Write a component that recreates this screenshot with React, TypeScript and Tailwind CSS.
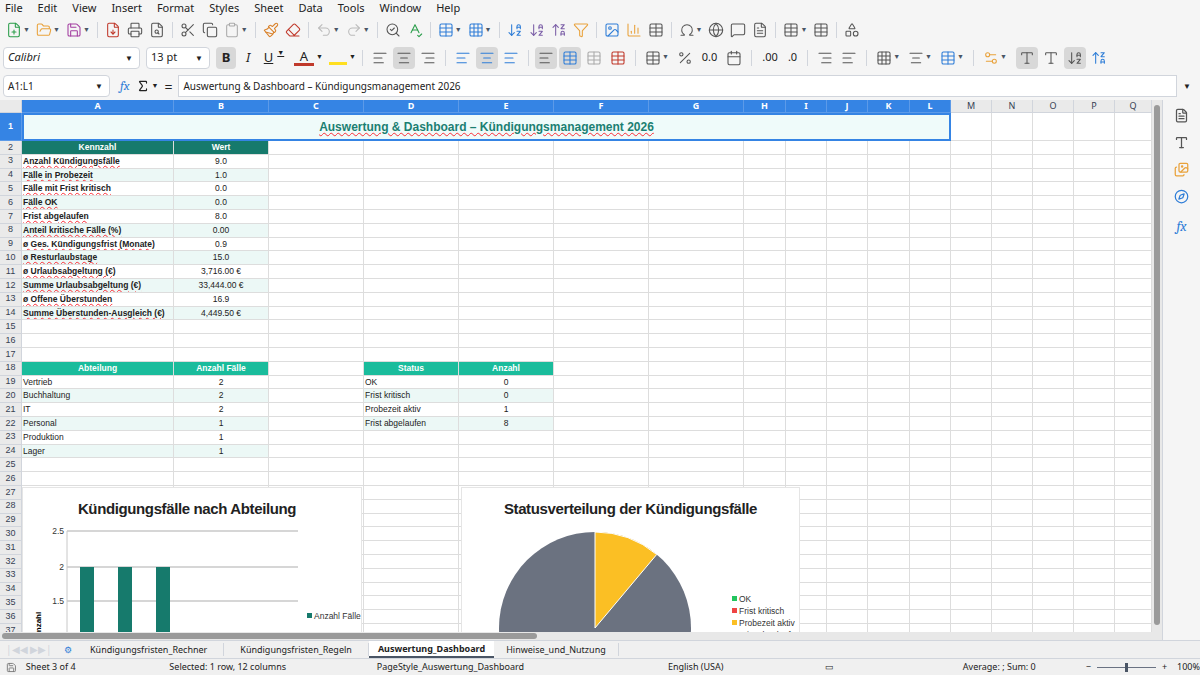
import { FilePlus, FolderOpen, Save, FileDown, Printer, FileSearch, Scissors, Copy, Clipboard, Paintbrush, Eraser, Undo2, Redo2, SearchCheck, SpellCheck, Table, Grid3x3, ArrowDownAZ, ArrowUpZA, Filter, Image, BarChart3, Omega, Globe, MessageSquare, Sigma, AlignLeft, AlignCenter, AlignRight, Percent, Calendar, Settings2, FileText, Type, Images, Compass, Shapes } from "lucide-react";

const cols: [string, number][] = [
  ["A", 152], ["B", 95], ["C", 95], ["D", 95], ["E", 95], ["F", 95], ["G", 95],
  ["H", 42], ["I", 41], ["J", 41], ["K", 42], ["L", 41], ["M", 41], ["N", 41], ["O", 41], ["P", 41], ["Q", 37],
];

const kpis: [string, string][] = [
  ["Anzahl Kündigungsfälle", "9.0"], ["Fälle in Probezeit", "1.0"], ["Fälle mit Frist kritisch", "0.0"],
  ["Fälle OK", "0.0"], ["Frist abgelaufen", "8.0"], ["Anteil kritische Fälle (%)", "0.00"],
  ["ø Ges. Kündigungsfrist (Monate)", "0.9"], ["ø Resturlaubstage", "15.0"], ["ø Urlaubsabgeltung (€)", "3,716.00 €"],
  ["Summe Urlaubsabgeltung (€)", "33,444.00 €"], ["ø Offene Überstunden", "16.9"], ["Summe Überstunden-Ausgleich (€)", "4,449.50 €"],
];
const depts: [string, string][] = [["Vertrieb", "2"], ["Buchhaltung", "2"], ["IT", "2"], ["Personal", "1"], ["Produktion", "1"], ["Lager", "1"]];
const stats: [string, string][] = [["OK", "0"], ["Frist kritisch", "0"], ["Probezeit aktiv", "1"], ["Frist abgelaufen", "8"]];

type C = { t?: string; cls?: string };

function cellsFor(r: number): Record<number, C> {
  const m: Record<number, C> = {};
  if (r === 2) {
    m[0] = { t: "Kennzahl", cls: "bg-[#167a6c] text-white font-bold justify-center" };
    m[1] = { t: "Wert", cls: "bg-[#167a6c] text-white font-bold justify-center" };
  }
  if (r >= 3 && r <= 14) {
    const k = kpis[r - 3];
    const bg = r % 2 === 0 ? "bg-[#ecf8f6]" : "";
    m[0] = { t: k[0], cls: `font-bold underline decoration-wavy decoration-red-500 decoration-[0.5px] ${bg}` };
    m[1] = { t: k[1], cls: `justify-center ${bg}` };
  }
  if (r === 18) {
    m[0] = { t: "Abteilung", cls: "bg-[#1abc9c] text-white font-bold justify-center" };
    m[1] = { t: "Anzahl Fälle", cls: "bg-[#1abc9c] text-white font-bold justify-center" };
    m[3] = { t: "Status", cls: "bg-[#1abc9c] text-white font-bold justify-center" };
    m[4] = { t: "Anzahl", cls: "bg-[#1abc9c] text-white font-bold justify-center" };
  }
  if (r >= 19 && r <= 24) {
    const d = depts[r - 19];
    const bg = r % 2 === 0 ? "bg-[#ecf8f6]" : "";
    m[0] = { t: d[0], cls: bg };
    m[1] = { t: d[1], cls: `justify-center ${bg}` };
  }
  if (r >= 19 && r <= 22) {
    const s = stats[r - 19];
    const bg = r % 2 === 0 ? "bg-[#ecf8f6]" : "";
    m[3] = { t: s[0], cls: bg };
    m[4] = { t: s[1], cls: `justify-center ${bg}` };
  }
  return m;
}

const Ico = ({ c: Comp, color = "#555", dd }: { c: any; color?: string; dd?: boolean }) => (
  <div className="flex items-center gap-[1px] px-[3px]">
    <Comp size={16} color={color} strokeWidth={1.6} />
    {dd && <span className="text-[7px] text-gray-600">▼</span>}
  </div>
);

const Sep = () => <div className="w-px h-4 bg-gray-300 mx-1" />;

export default function App() {
  const rows = Array.from({ length: 38 }, (_, i) => i + 1);
  return (
    <div className="w-[1200px] h-[675px] bg-[#f5f5f5] overflow-hidden flex flex-col text-[#222]" style={{ fontFamily: '"Noto Sans", "Open Sans", sans-serif' }}>
      {/* menu */}
      <div className="h-[17px] flex items-center gap-[15px] px-[5px] text-[11px]">
        {["File", "Edit", "View", "Insert", "Format", "Styles", "Sheet", "Data", "Tools", "Window", "Help"].map((m) => <span key={m}>{m}</span>)}
      </div>
      {/* toolbar 1 */}
      <div className="h-[26px] flex items-center px-[3px]">
        <Ico c={FilePlus} color="#2a9d4a" dd /><Ico c={FolderOpen} color="#e9a23b" dd /><Ico c={Save} color="#a33ea1" dd />
        <Sep />
        <Ico c={FileDown} color="#c0392b" /><Ico c={Printer} /><Ico c={FileSearch} />
        <Sep />
        <Ico c={Scissors} /><Ico c={Copy} /><Ico c={Clipboard} color="#aaa" dd />
        <Sep />
        <Ico c={Paintbrush} color="#d9822b" /><Ico c={Eraser} color="#c0392b" />
        <Sep />
        <Ico c={Undo2} color="#bbb" dd /><Ico c={Redo2} color="#bbb" dd />
        <Sep />
        <Ico c={SearchCheck} /><Ico c={SpellCheck} color="#2a9d4a" />
        <Sep />
        <Ico c={Table} color="#2e7dd7" dd /><Ico c={Grid3x3} color="#2e7dd7" dd />
        <Sep />
        <Ico c={ArrowDownAZ} color="#2e7dd7" /><Ico c={ArrowDownAZ} color="#7b5ea7" /><Ico c={ArrowUpZA} color="#7b5ea7" /><Ico c={Filter} color="#e9a23b" />
        <Sep />
        <Ico c={Image} color="#2e7dd7" /><Ico c={BarChart3} color="#e9a23b" /><Ico c={Table} />
        <Sep />
        <Ico c={Omega} dd /><Ico c={Globe} /><Ico c={MessageSquare} /><Ico c={FileText} />
        <Sep />
        <Ico c={Table} dd /><Ico c={Table} />
        <Sep />
        <Ico c={Shapes} />
      </div>
      {/* toolbar 2 */}
      <div className="h-[29px] flex items-center px-[3px] gap-[2px]">
        <div className="w-[137px] h-[22px] bg-white border border-gray-300 rounded flex items-center text-[11px] italic">
          <span className="flex-1 px-[4px]">Calibri</span>
          <span className="w-[20px] text-center text-[8px] not-italic">▼</span>
        </div>
        <div className="w-[64px] h-[22px] bg-white border border-gray-300 rounded flex items-center text-[11px] ml-[4px]">
          <span className="flex-1 px-[4px]">13 pt</span>
          <span className="w-[20px] text-center text-[8px]">▼</span>
        </div>
        <div className="w-[20px] h-[22px] bg-[#d8d8d8] rounded flex items-center justify-center font-bold text-[13px] ml-[4px]">B</div>
        <div className="w-[20px] flex justify-center italic text-[13px]">I</div>
        <div className="w-[28px] flex justify-center underline text-[13px]">U<span className="text-[7px] ml-1">▼</span></div>
        <div className="w-[20px] flex justify-center text-[13px] border-b-[3px] border-[#c0392b] leading-[14px] ml-1">A</div>
        <span className="text-[7px]">▼</span>
        <div className="w-[18px] h-[14px] border-b-[3px] border-yellow-300 ml-1" /><span className="text-[7px]">▼</span>
        <Sep />
        <Ico c={AlignLeft} /><div className="bg-[#d8d8d8] rounded py-[3px]"><Ico c={AlignCenter} /></div><Ico c={AlignRight} />
        <Sep />
        <Ico c={AlignLeft} color="#2e7dd7" /><div className="bg-[#d8d8d8] rounded py-[3px]"><Ico c={AlignCenter} color="#2e7dd7" /></div><Ico c={AlignLeft} color="#2e7dd7" />
        <Sep />
        <div className="bg-[#d8d8d8] rounded py-[3px]"><Ico c={AlignLeft} /></div><div className="bg-[#d8d8d8] rounded py-[3px]"><Ico c={Table} color="#2e7dd7" /></div><Ico c={Table} color="#aaa" /><Ico c={Table} color="#c0392b" />
        <Sep />
        <Ico c={Table} dd /><Ico c={Percent} /><span className="text-[11px] px-1">0.0</span><Ico c={Calendar} />
        <Sep />
        <span className="text-[11px] px-1">.00</span><span className="text-[11px] px-1">.0</span>
        <Sep />
        <Ico c={AlignRight} /><Ico c={AlignLeft} />
        <Sep />
        <Ico c={Grid3x3} dd /><Ico c={AlignCenter} dd /><Ico c={Table} color="#2e7dd7" dd />
        <Sep />
        <Ico c={Settings2} color="#e9a23b" dd />
        <div className="bg-[#d8d8d8] rounded py-[3px] ml-1"><Ico c={Type} /></div><Ico c={Type} />
        <div className="bg-[#d8d8d8] rounded py-[3px]"><Ico c={ArrowDownAZ} /></div><Ico c={ArrowUpZA} color="#2e7dd7" />
      </div>
      {/* formula bar */}
      <div className="h-[28px] flex items-center px-[3px] gap-[6px]">
        <div className="w-[107px] h-[22px] bg-white border border-gray-300 rounded flex items-center text-[10px]">
          <span className="flex-1 px-[4px]">A1:L1</span>
          <span className="w-[20px] text-center text-[8px]">▼</span>
        </div>
        <span className="italic text-[13px] text-[#2e7dd7] font-serif ml-1">fx</span>
        <Sigma size={14} /><span className="text-[7px] -ml-1">▼</span>
        <span className="text-[14px]">=</span>
        <div className="flex-1 h-[22px] bg-white border border-gray-300 flex items-center text-[10px] px-[4px]">Auswertung &amp; Dashboard – Kündigungsmanagement 2026</div>
        <span className="text-[8px] w-[14px]">▼</span>
      </div>

      {/* grid + sidebar */}
      <div className="flex h-[540px]">
        <div className="w-[1152px] flex flex-col">
          <div className="relative h-[532px] overflow-hidden bg-white">
            <div className="flex h-[13px] text-[9px]">
              <div className="w-[22px] shrink-0 bg-[#eaeaea] border-r border-b border-gray-300" />
              {cols.map(([n, w], i) => (
                <div key={n} style={{ width: w }} className={`shrink-0 flex items-center justify-center border-r border-b ${i < 12 ? "bg-[#3584e4] text-white border-[#5c9ae8] font-bold" : "bg-[#eaeaea] text-gray-700 border-gray-300"}`}>{n}</div>
              ))}
            </div>
            {rows.map((r) => {
              const m = cellsFor(r);
              const h = r === 1 ? "h-[28px]" : "h-[13.8px]";
              return (
                <div key={r} className={`flex ${h} text-[8.5px]`} style={{ fontFamily: '"Liberation Sans", sans-serif' }}>
                  <div className={`w-[22px] shrink-0 flex items-center justify-center border-r border-b text-[9px] ${r === 1 ? "bg-[#3584e4] text-white border-[#5c9ae8] font-bold" : "bg-[#eaeaea] text-gray-700 border-gray-300"}`}>{r}</div>
                  {r === 1 ? (
                    <>
                      <div className="w-[929px] shrink-0 bg-[#effbfa] border-2 border-[#3584e4] flex items-center justify-center text-[12px] font-bold text-[#1b7f72] underline decoration-wavy decoration-red-500 decoration-[0.5px]">
                        Auswertung &amp; Dashboard – Kündigungsmanagement 2026
                      </div>
                      {cols.slice(12).map(([n, w]) => <div key={n} style={{ width: w }} className="shrink-0 border-r border-b border-[#ddd]" />)}
                    </>
                  ) : (
                    cols.map(([n, w], i) => {
                      const c = m[i];
                      return (
                        <div key={n} style={{ width: w }} className={`shrink-0 flex items-center px-[1px] border-r border-b border-[#ddd] whitespace-nowrap overflow-hidden ${c?.cls ?? ""}`}>{c?.t}</div>
                      );
                    })
                  )}
                </div>
              );
            })}

            {/* bar chart */}
            <div className="absolute left-[22px] top-[387px] w-[340px] h-[160px] bg-white border border-[#e5e5e5]" style={{ fontFamily: '"Liberation Sans", sans-serif' }}>
              <div className="text-center text-[15px] font-bold mt-[10px] -ml-[10px] tracking-tight">Kündigungsfälle nach Abteilung</div>
              <svg className="absolute left-0 top-0" width="340" height="160">
                {[[43, "2.5"], [79, "2"], [113, "1.5"], [147, "1"]].map(([y, l]) => (
                  <g key={l as string}>
                    <line x1="44" x2="275" y1={y as number} y2={y as number} stroke="#c8c8c8" strokeWidth="1.5" />
                    <text x="41" y={(y as number) + 3} fontSize="8.5" textAnchor="end" fill="#333">{l}</text>
                  </g>
                ))}
                <line x1="44" x2="44" y1="43" y2="160" stroke="#c8c8c8" />
                {[57, 95, 133].map((x) => <rect key={x} x={x} y="79" width="14" height="90" fill="#167a6c" />)}
                <text x="18" y="150" fontSize="8" fontWeight="bold" transform="rotate(-90 18 150)">Anzahl</text>
                <rect x="284" y="125" width="5" height="5" fill="#167a6c" />
                <text x="291" y="131" fontSize="8.5" fill="#333">Anzahl Fälle</text>
              </svg>
            </div>

            {/* pie chart */}
            <div className="absolute left-[461px] top-[387px] w-[339px] h-[160px] bg-white border border-[#e5e5e5]" style={{ fontFamily: '"Liberation Sans", sans-serif' }}>
              <div className="text-center text-[15px] font-bold mt-[10px] tracking-tight">Statusverteilung der Kündigungsfälle</div>
              <svg className="absolute left-0 top-0" width="339" height="160">
                <circle cx="133" cy="140" r="96" fill="#6b7280" />
                <path d="M133 140 L133 44 A96 96 0 0 1 194.7 66.5 Z" fill="#fbbf24" stroke="#fff" strokeWidth="1" />
                {[["OK", "#22c55e"], ["Frist kritisch", "#ef4444"], ["Probezeit aktiv", "#fbbf24"], ["Frist abgelaufen", "#6b7280"]].map(([l, c], i) => (
                  <g key={l}>
                    <rect x="270" y={108 + i * 12} width="5" height="5" fill={c} />
                    <text x="277" y={114 + i * 12} fontSize="8.5" fill="#333">{l}</text>
                  </g>
                ))}
              </svg>
            </div>
          </div>
          <div className="h-[8px] bg-[#e8e8e8] flex items-center px-[2px]">
            <div className="w-[535px] h-[6px] bg-[#9a9a9a] rounded-full" />
          </div>
        </div>
        <div className="w-[10px] bg-[#e8e8e8] flex justify-center pt-[5px]">
          <div className="w-[6px] h-[520px] bg-[#9a9a9a] rounded-full" />
        </div>
        <div className="w-[38px] flex flex-col items-center gap-[12px] pt-[8px] border-l border-gray-300">
          <FileText size={15} color="#555" />
          <Type size={15} color="#555" />
          <Images size={15} color="#e9a23b" />
          <Compass size={15} color="#2e7dd7" />
          <span className="italic font-serif text-[14px] text-[#2e7dd7]">fx</span>
        </div>
      </div>

      {/* tabs */}
      <div className="h-[18px] flex items-center text-[9px] bg-[#f0f0f0] border-t border-gray-300">
        <div className="w-[62px] text-gray-300 text-[10px] pl-[6px]">|◀◀ ▶▶|</div>
        <div className="w-[12px] text-[#2e7dd7] text-center">⚙</div>
        <span className="px-[16px] border-r border-gray-300">Kündigungsfristen_Rechner</span>
        <span className="px-[16px] border-r border-gray-300">Kündigungsfristen_Regeln</span>
        <span className="px-[9px] font-bold bg-white border-b-2 border-gray-600 h-full flex items-center">Auswertung_Dashboard</span>
        <span className="px-[12px] border-r border-gray-300">Hinweise_und_Nutzung</span>
      </div>
      {/* status */}
      <div className="h-[17px] flex items-center text-[9px] bg-[#f0f0f0] border-t border-gray-300">
        <Save size={11} color="#777" className="ml-[6px]" />
        <span className="ml-[9px] w-[146px]">Sheet 3 of 4</span>
        <span className="w-[211px]">Selected: 1 row, 12 columns</span>
        <span className="w-[296px]">PageStyle_Auswertung_Dashboard</span>
        <span className="w-[160px]">English (USA)</span>
        <span className="w-[140px]">▭</span>
        <span className="w-[125px]">Average: ; Sum: 0</span>
        <span>−</span>
        <div className="w-[60px] h-px bg-gray-500 mx-[6px] relative"><div className="absolute left-[28px] -top-[4px] w-[3px] h-[9px] bg-gray-600" /></div>
        <span>+</span>
        <span className="ml-[10px]">100%</span>
      </div>
    </div>
  );
}
